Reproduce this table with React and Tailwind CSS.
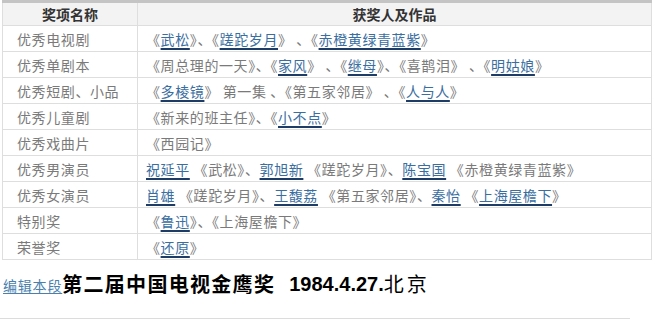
import React from "react";

const L = ({ children }) => (
  <a className="text-[#3a6e9f] underline decoration-[#1d3c66] decoration-[1.5px] underline-offset-[3px]">{children}</a>
);

const rows = [
  ["优秀电视剧", <>《<L>武松</L>》、《<L>蹉跎岁月</L>》 、《<L>赤橙黄绿青蓝紫</L>》</>],
  ["优秀单剧本", <>《周总理的一天》、《<L>家风</L>》 、《<L>继母</L>》、《喜鹊泪》 、《<L>明姑娘</L>》</>],
  ["优秀短剧、小品", <>《<L>多棱镜</L>》 第一集 、《第五家邻居》 、《<L>人与人</L>》</>],
  ["优秀儿童剧", <>《新来的班主任》、《<L>小不点</L>》</>],
  ["优秀戏曲片", <>《西园记》</>],
  ["优秀男演员", <><L>祝延平</L> 《武松》、<L>郭旭新</L> 《蹉跎岁月》、<L>陈宝国</L> 《赤橙黄绿青蓝紫》</>],
  ["优秀女演员", <><L>肖雄</L> 《蹉跎岁月》、<L>王馥荔</L> 《第五家邻居》、<L>秦怡</L> 《<L>上海屋檐下</L>》</>],
  ["特别奖", <>《<L>鲁迅</L>》、《上海屋檐下》</>],
  ["荣誉奖", <>《<L>还原</L>》</>],
];

export default function App() {
  return (
    <div className="w-[653px] h-[320px] bg-white overflow-hidden" style={{ fontFamily: '"Noto Sans CJK SC", "Liberation Sans", sans-serif' }}>
      <div className="pl-[2px] pr-[1px]">
        <table className="w-full border-collapse border-t-[3px] border-t-[#c4c4c4] text-[14px] text-[#7a7a7a] leading-none">
          <thead>
            <tr className="h-[24px] bg-[#f3f3f3]">
              <th className="w-[135px] border-l border-r border-[#dedede] font-bold text-[#333] text-center">奖项名称</th>
              <th className="border-r border-[#dedede] font-bold text-[#333] text-center">获奖人及作品</th>
            </tr>
          </thead>
          <tbody>
            {rows.map(([a, b], i) => (
              <tr key={i} className="h-[26px]">
                <td className="border border-[#dedede] pl-[14px] tracking-[0.6px] whitespace-nowrap">{a}</td>
                <td className="border border-[#dedede] pl-[8px] tracking-[0.6px] whitespace-nowrap">{b}</td>
              </tr>
            ))}
          </tbody>
        </table>
      </div>
      <div className="flex items-end h-[44px] pl-[3px] pb-[5px]">
        <a className="text-[14px] tracking-[0.8px] text-[#4a7fae] underline decoration-[#4a7fae] underline-offset-2 mb-[3px]">编辑本段</a>
        <span className="text-[20px] font-bold text-black tracking-[1.3px]">第二届中国电视金鹰奖</span>
        <span className="text-[20px] font-bold text-black ml-[14px]" style={{ fontFamily: '"Liberation Sans", sans-serif' }}>1984.4.27.</span>
        <span className="text-[20px] text-black tracking-[3px]">北京</span>
      </div>
      <div className="mt-[14px] w-[630px] h-px bg-[#dcdcdc]" />
    </div>
  );
}
